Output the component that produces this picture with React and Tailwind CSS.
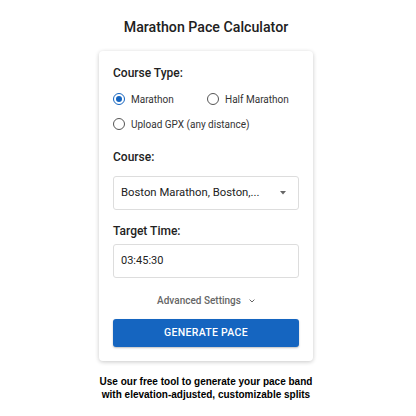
import React from "react";

function Radio({ checked, label }) {
  return (
    <label className="flex items-center gap-[6px] text-[10px] text-[#333]">
      <span
        className={
          "flex h-[12px] w-[12px] items-center justify-center rounded-full border-[1.5px] " +
          (checked ? "border-[#1565c0]" : "border-[#555]")
        }
      >
        {checked && <span className="h-[6px] w-[6px] rounded-full bg-[#1565c0]" />}
      </span>
      <span>{label}</span>
    </label>
  );
}

export default function App() {
  return (
    <div
      className="flex h-[416px] w-[416px] flex-col items-center bg-white pr-[4px]"
      style={{ fontFamily: "Roboto, 'Liberation Sans', sans-serif" }}
    >
      <h1 className="mt-[17px] text-[14.2px] font-medium leading-[20px] text-[#212121]">
        Marathon Pace Calculator
      </h1>
      <div className="mt-[14px] flex w-[214px] flex-col rounded-[4px] bg-white px-[14px] pb-[14px] pt-[14px] shadow-[0_1px_4px_rgba(0,0,0,0.22)]">
        <div className="text-[12px] font-medium leading-[16px] text-[#222]">Course Type:</div>
        <div className="mt-[11px] flex h-[14px] items-center">
          <div className="w-[94px]">
            <Radio checked label="Marathon" />
          </div>
          <Radio label="Half Marathon" />
        </div>
        <div className="mt-[11px] flex h-[14px] items-center">
          <Radio label="Upload GPX (any distance)" />
        </div>
        <div className="mt-[18px] text-[12px] font-medium leading-[16px] text-[#222]">Course:</div>
        <div className="mt-[11px] flex h-[34px] items-center justify-between rounded-[3px] border border-[#ddd] pl-[7px] pr-[12px]">
          <span className="text-[11.3px] text-[#222]">Boston Marathon, Boston,...</span>
          <svg width="6" height="4" viewBox="0 0 6 4">
            <path d="M0 0 L6 0 L3 3.5 Z" fill="#666" />
          </svg>
        </div>
        <div className="mt-[13px] text-[12px] font-medium leading-[16px] text-[#222]">Target Time:</div>
        <div className="mt-[5px] flex h-[34px] items-center rounded-[3px] border border-[#ddd] pl-[7px]">
          <span className="text-[11px] text-[#222]">03:45:30</span>
        </div>
        <div className="mt-[15px] flex items-center justify-center gap-[8px] text-[10px] font-medium leading-[16px] text-[#666]">
          <span>Advanced Settings</span>
          <svg width="6" height="4" viewBox="0 0 6 4">
            <path d="M0.6 0.6 L3 3 L5.4 0.6" fill="none" stroke="#666" strokeWidth="1" />
          </svg>
        </div>
        <button className="mt-[10px] flex h-[28px] items-center justify-center rounded-[3px] bg-[#1565c0] text-[10.5px] font-medium tracking-[0.3px] text-white shadow-[0_1px_2px_rgba(0,0,0,0.25)]">
          GENERATE PACE
        </button>
      </div>
      <p
        className="mt-[14px] text-center text-[10px] font-bold leading-[13px] text-black"
        style={{ fontFamily: "'Liberation Sans', Arial, sans-serif" }}
      >
        Use our free tool to generate your pace band
        <br />
        with elevation-adjusted, customizable splits
      </p>
    </div>
  );
}
